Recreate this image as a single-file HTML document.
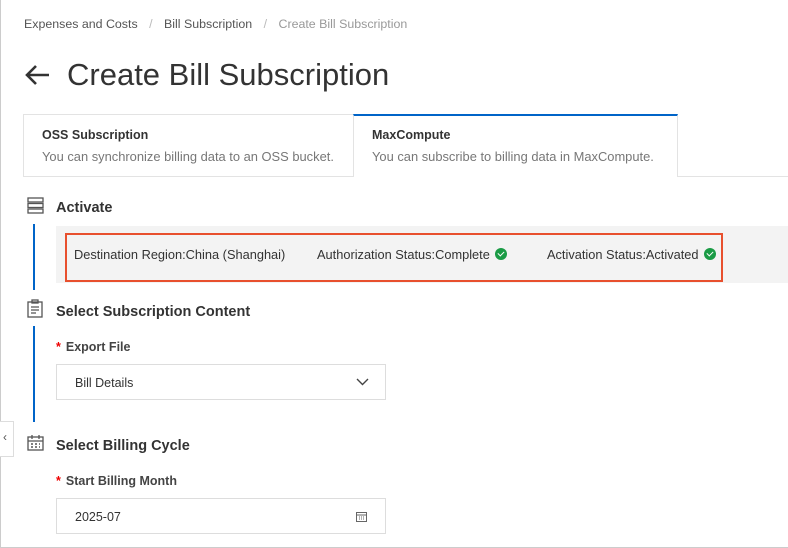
<!DOCTYPE html>
<html><head><style>
*{margin:0;padding:0;box-sizing:border-box}
body{width:788px;height:548px;overflow:hidden;background:#fff;font-family:"Liberation Sans",sans-serif;color:#333;position:relative}
.a{position:absolute;white-space:nowrap}
.bc{top:17px;font-size:12.4px;color:#555}
.tab{position:absolute;top:114px;height:63px;border:1px solid #e3e3e3;padding:13px 18px;white-space:nowrap}
.tab b{display:block;font-size:12.5px;color:#333;margin-bottom:6px}
.tab span{font-size:12.9px;color:#777}
.h{font-size:14.5px;font-weight:bold;color:#333}
.lbl{font-size:12.5px;font-weight:bold;color:#444}
.lbl i{color:#e00;font-style:normal;margin-right:5px}
.inp{position:absolute;left:56px;width:330px;height:36px;border:1px solid #ddd;font-size:12.5px;padding:11px 18px}
.ok{display:inline-block;width:12px;height:12px;border-radius:50%;background:#1a9b45;vertical-align:-1px;margin-left:5px;position:relative}
.ok:after{content:"";position:absolute;left:3px;top:3px;width:5px;height:3px;border-left:1.5px solid #fff;border-bottom:1.5px solid #fff;transform:rotate(-45deg)}
.rb{position:absolute;top:12px;font-size:12.8px;color:#333;white-space:nowrap}
</style></head><body>
<div class="a" style="left:0;top:0;width:1px;height:548px;background:#ccc"></div>
<div class="a" style="left:0;top:547px;width:788px;height:1px;background:#ccc"></div>
<div class="a bc" style="left:24px">Expenses and Costs <span style="color:#bbb;margin:0 8px">/</span> Bill Subscription <span style="color:#bbb;margin:0 8px">/</span> <span style="color:#999">Create Bill Subscription</span></div>
<svg class="a" style="left:24px;top:64px" width="26" height="22" viewBox="0 0 26 22"><path d="M25 11H3M12 2L3 11l9 9" stroke="#333" stroke-width="2.6" fill="none"/></svg>
<div class="a" style="left:67px;top:57px;font-size:31px;color:#333">Create Bill Subscription</div>
<div class="tab" style="left:23px;width:331px"><b>OSS Subscription</b><span>You can synchronize billing data to an OSS bucket.</span></div>
<div class="tab" style="left:353px;width:325px;border-top:2px solid #0064c8;border-bottom:none;padding-top:12px"><b>MaxCompute</b><span>You can subscribe to billing data in MaxCompute.</span></div>
<div class="a" style="left:678px;top:176px;width:110px;border-top:1px solid #e3e3e3"></div>
<div class="a" style="left:33px;top:224px;width:2px;height:66px;background:#0064c8"></div>
<div class="a" style="left:33px;top:326px;width:2px;height:96px;background:#0064c8"></div>
<svg class="a" style="left:27px;top:197px" width="17" height="17" viewBox="0 0 17 17" fill="none" stroke="#555" stroke-width="1.3"><rect x="1" y="1" width="15" height="4"/><rect x="1" y="6.5" width="15" height="4"/><rect x="1" y="12" width="15" height="4"/></svg>
<div class="a h" style="left:56px;top:200px">Activate</div>
<div class="a" style="left:56px;top:226px;width:732px;height:57px;background:#f3f3f3"></div>
<div class="a" style="left:65px;top:233px;width:658px;height:49px;border:2px solid #e8502e">
<span class="rb" style="left:7px">Destination Region:China (Shanghai)</span>
<span class="rb" style="left:250px">Authorization Status:Complete<i class="ok"></i></span>
<span class="rb" style="left:480px">Activation Status:Activated<i class="ok"></i></span></div>
<svg class="a" style="left:27px;top:299px" width="16" height="19" viewBox="0 0 16 19" fill="none" stroke="#555" stroke-width="1.3"><rect x="1" y="3" width="14" height="15"/><rect x="5" y="1" width="6" height="3"/><path d="M4 8h8M4 11h8M4 14h5"/></svg>
<div class="a h" style="left:56px;top:304px">Select Subscription Content</div>
<div class="a lbl" style="left:56px;top:340px"><i>*</i>Export File</div>
<div class="inp" style="top:364px">Bill Details<svg style="position:absolute;right:16px;top:13px" width="13" height="8" viewBox="0 0 13 8"><path d="M1 1l5.5 5.5L12 1" stroke="#444" stroke-width="1.4" fill="none"/></svg></div>
<div class="a" style="left:0;top:421px;width:14px;height:36px;border:1px solid #ddd;border-left:none;background:#fff;font-size:12px;color:#555;padding:8px 3px">&lsaquo;</div>
<svg class="a" style="left:27px;top:434px" width="17" height="17" viewBox="0 0 17 17" fill="none" stroke="#555" stroke-width="1.3"><rect x="1" y="3" width="15" height="13"/><path d="M1 7h15M5 1v4M12 1v4"/><path d="M4 10h2M8 10h2M12 10h1M4 13h2M8 13h2M12 13h1" stroke-width="1.6"/></svg>
<div class="a h" style="left:56px;top:438px">Select Billing Cycle</div>
<div class="a lbl" style="left:56px;top:474px"><i>*</i>Start Billing Month</div>
<div class="inp" style="top:498px">2025-07<svg style="position:absolute;right:18px;top:12px" width="11" height="11" viewBox="0 0 11 11" fill="none" stroke="#666"><rect x="0.5" y="1.5" width="10" height="9"/><path d="M0.5 4h10M3 6h1M5 6h1M7 6h1M3 8h1M5 8h1M7 8h1"/></svg></div>
</body></html>
